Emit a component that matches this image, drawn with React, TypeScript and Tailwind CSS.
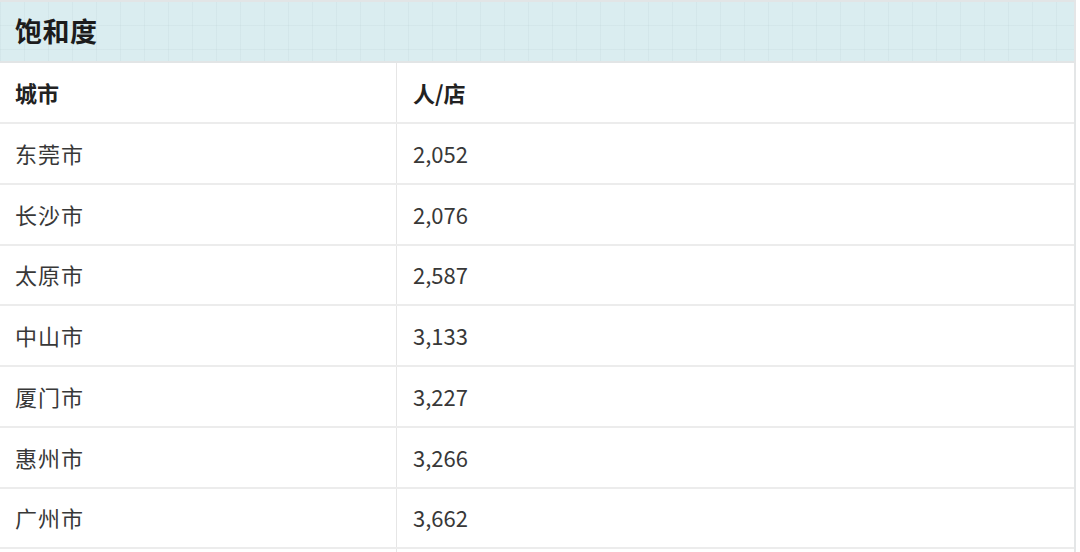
import React from "react";

const rows: [string, string][] = [
  ["东莞市", "2,052"],
  ["长沙市", "2,076"],
  ["太原市", "2,587"],
  ["中山市", "3,133"],
  ["厦门市", "3,227"],
  ["惠州市", "3,266"],
  ["广州市", "3,662"],
];

export default function App() {
  return (
    <div
      className="w-[1080px] h-[552px] overflow-hidden bg-white"
      style={{ fontFamily: '"Noto Sans CJK SC", "Noto Sans", sans-serif' }}
    >
      <div className="w-[1076px] h-[552px] border-r-2 border-[#e4e6e7]">
        <div className="h-[63px] border-t-2 border-b-2 border-[#e2e5e6] bg-[#daedf0] bg-[linear-gradient(90deg,rgba(120,150,160,0.07)_1px,transparent_1px),linear-gradient(0deg,rgba(120,150,160,0.07)_1px,transparent_1px)] bg-[length:24px_24px] flex items-center px-[15px]">
          <span className="text-[27px] font-bold text-[#1c1c1c] tracking-[0.5px]">饱和度</span>
        </div>
        <div className="flex h-[61px] border-b-2 border-[#ececec]">
          <div className="w-[397px] border-r border-[#e6e6e6] flex items-center pl-[15px] text-[22px] font-bold text-[#222]">城市</div>
          <div className="flex-1 flex items-center pl-[16px] text-[22px] font-bold text-[#222]">人/店</div>
        </div>
        {rows.map(([c, v]) => (
          <div key={c} className="flex h-[60.75px] border-b-2 border-[#ececec]">
            <div className="w-[397px] border-r border-[#e6e6e6] flex items-center pl-[15px] text-[22px] text-[#383838] tracking-[1px]">{c}</div>
            <div className="flex-1 flex items-center pl-[16px] text-[22px] text-[#383838]">{v}</div>
          </div>
        ))}
        <div className="flex h-[10px]">
          <div className="w-[397px] border-r border-[#e6e6e6]" />
        </div>
      </div>
    </div>
  );
}
